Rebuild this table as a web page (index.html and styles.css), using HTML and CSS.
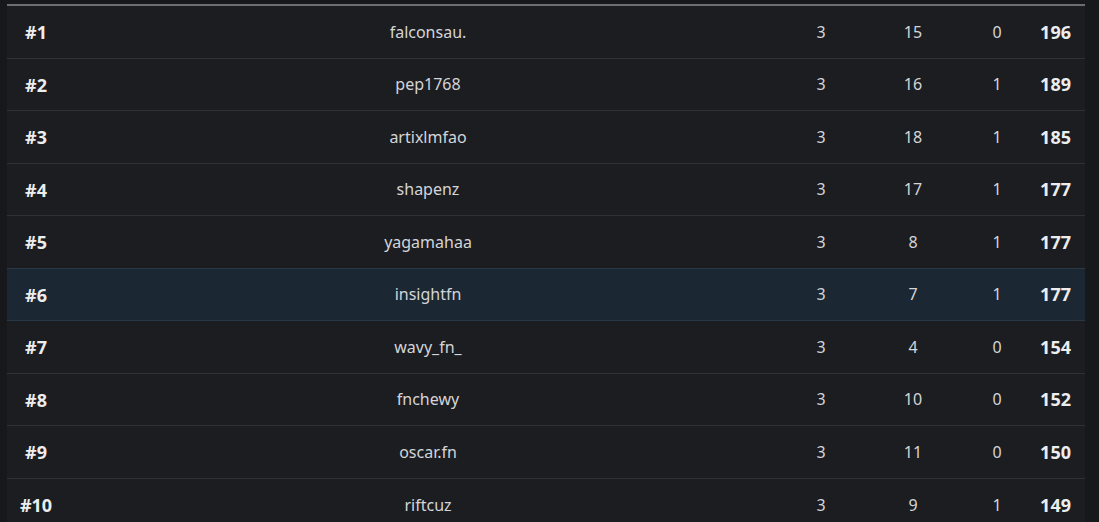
FILE: index.html
```html
<!DOCTYPE html>
<html>
<head>
<meta charset="utf-8">
<link rel="stylesheet" href="styles.css">
</head>
<body>
<div class="page">
  <div class="board">
    <div class="row"><span class="rank">#1</span><span class="name">falconsau.</span><span class="stat">3</span><span class="stat">15</span><span class="stat">0</span><span class="score">196</span></div>
    <div class="row"><span class="rank">#2</span><span class="name">pep1768</span><span class="stat">3</span><span class="stat">16</span><span class="stat">1</span><span class="score">189</span></div>
    <div class="row"><span class="rank">#3</span><span class="name">artixlmfao</span><span class="stat">3</span><span class="stat">18</span><span class="stat">1</span><span class="score">185</span></div>
    <div class="row"><span class="rank">#4</span><span class="name">shapenz</span><span class="stat">3</span><span class="stat">17</span><span class="stat">1</span><span class="score">177</span></div>
    <div class="row"><span class="rank">#5</span><span class="name">yagamahaa</span><span class="stat">3</span><span class="stat">8</span><span class="stat">1</span><span class="score">177</span></div>
    <div class="row active"><span class="rank">#6</span><span class="name">insightfn</span><span class="stat">3</span><span class="stat">7</span><span class="stat">1</span><span class="score">177</span></div>
    <div class="row"><span class="rank">#7</span><span class="name">wavy_fn_</span><span class="stat">3</span><span class="stat">4</span><span class="stat">0</span><span class="score">154</span></div>
    <div class="row"><span class="rank">#8</span><span class="name">fnchewy</span><span class="stat">3</span><span class="stat">10</span><span class="stat">0</span><span class="score">152</span></div>
    <div class="row"><span class="rank">#9</span><span class="name">oscar.fn</span><span class="stat">3</span><span class="stat">11</span><span class="stat">0</span><span class="score">150</span></div>
    <div class="row last"><span class="rank">#10</span><span class="name">riftcuz</span><span class="stat">3</span><span class="stat">9</span><span class="stat">1</span><span class="score">149</span></div>
  </div>
</div>
</body>
</html>
```
FILE: styles.css
```css
html, body {
  margin: 0;
  padding: 0;
  background: #17181b;
  height: 100%;
  overflow: hidden;
}
.page {
  padding: 4px 14px 0 7px;
  font-family: "Noto Sans", "Open Sans", sans-serif;
}
.board {
  width: 1078px;
  border-top: 2px solid #6c6d71;
  background: #1c1d21;
}
.row {
  display: grid;
  grid-template-columns: 58px 726px 60px 124px 44px 1fr;
  align-items: center;
  height: 52.5px;
  box-sizing: border-box;
  border-bottom: 1px solid #303136;
  color: #d4d5d8;
  font-size: 16px;
}
.row.active {
  background: #1b2733;
  border-top: 1px solid #2a3744;
  border-bottom: 1px solid #2a3744;
  margin-top: -1px;
  height: 53.5px;
}
.row.last {
  border-bottom: none;
}
.rank {
  text-align: center;
  font-weight: 700;
  font-size: 18px;
  color: #eceded;
  padding-top: 1px;
}
.name, .stat {
  text-align: center;
}
.score {
  text-align: right;
  padding-right: 14px;
  font-weight: 700;
  font-size: 18px;
  color: #eceded;
}
```
